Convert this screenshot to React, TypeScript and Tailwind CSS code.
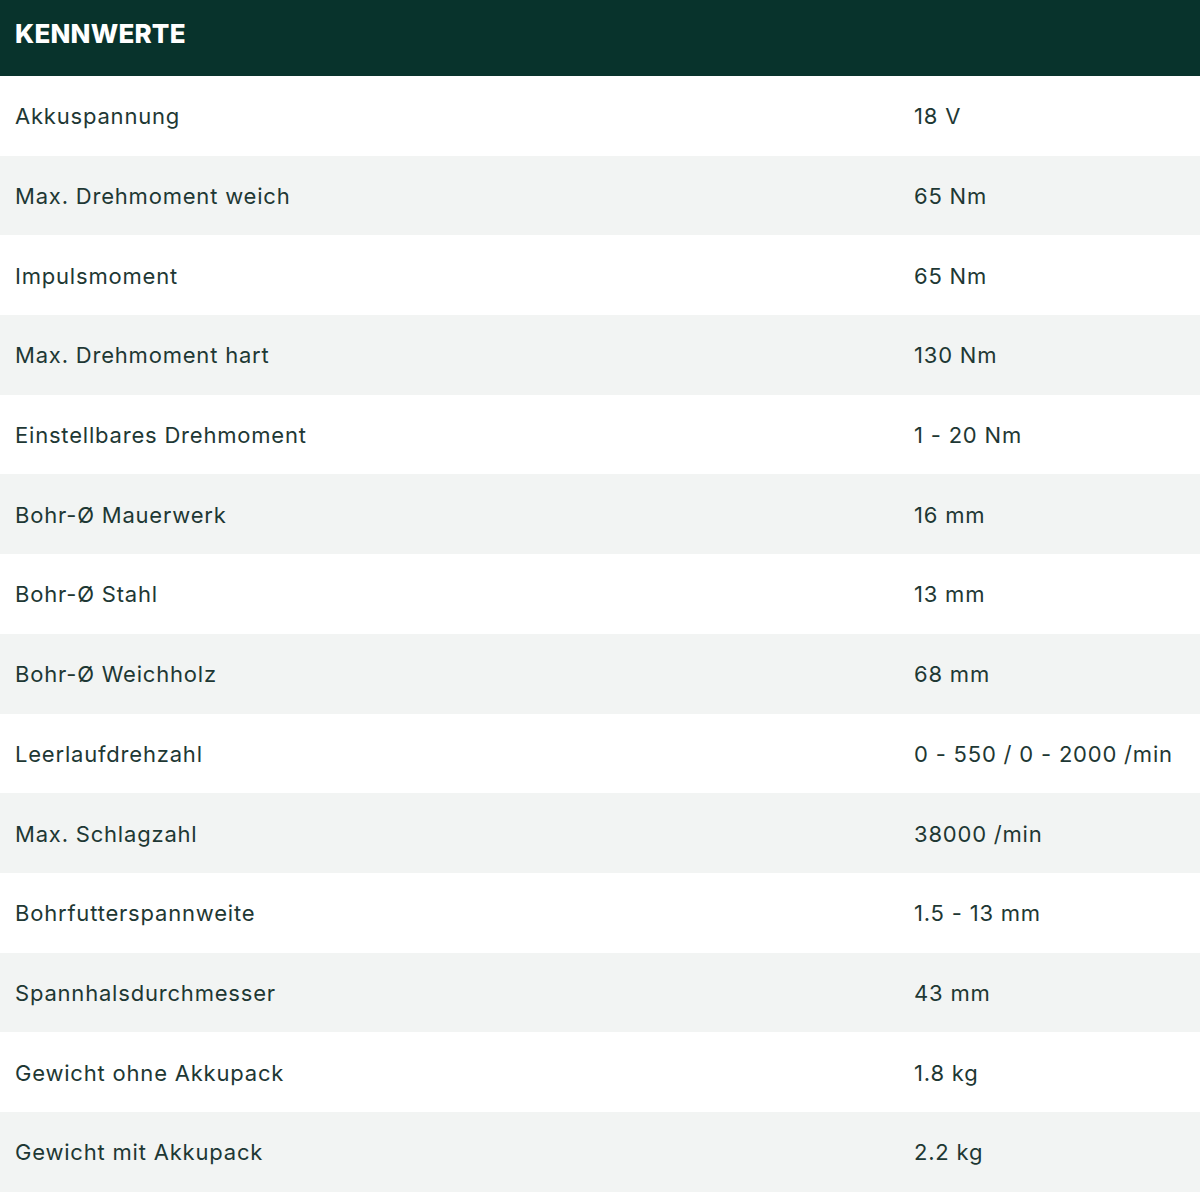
const rows: [string, string][] = [
  ['Akkuspannung', '18 V'],
  ['Max. Drehmoment weich', '65 Nm'],
  ['Impulsmoment', '65 Nm'],
  ['Max. Drehmoment hart', '130 Nm'],
  ['Einstellbares Drehmoment', '1 - 20 Nm'],
  ['Bohr-Ø Mauerwerk', '16 mm'],
  ['Bohr-Ø Stahl', '13 mm'],
  ['Bohr-Ø Weichholz', '68 mm'],
  ['Leerlaufdrehzahl', '0 - 550 / 0 - 2000 /min'],
  ['Max. Schlagzahl', '38000 /min'],
  ['Bohrfutterspannweite', '1.5 - 13 mm'],
  ['Spannhalsdurchmesser', '43 mm'],
  ['Gewicht ohne Akkupack', '1.8 kg'],
  ['Gewicht mit Akkupack', '2.2 kg'],
];

export default function App() {
  return (
    <div className="w-[1200px] h-[1200px] bg-white font-['Inter','Liberation_Sans',sans-serif]">
      <div className="flex h-[76px] items-center bg-[#08332c] px-[15px] pb-[9px]">
        <h2 className="text-[26px] font-extrabold tracking-[0.2px] text-white">KENNWERTE</h2>
      </div>
      {rows.map(([label, value], i) => (
        <div
          key={label}
          className={`flex h-[79.7px] items-center pt-[2px] text-[22px] tracking-[0.8px] text-[#1e3834] ${i % 2 === 1 ? 'bg-[#f2f4f3]' : 'bg-white'}`}
        >
          <span className="w-[914px] pl-[15px]">{label}</span>
          <span className="whitespace-nowrap">{value}</span>
        </div>
      ))}
    </div>
  );
}
